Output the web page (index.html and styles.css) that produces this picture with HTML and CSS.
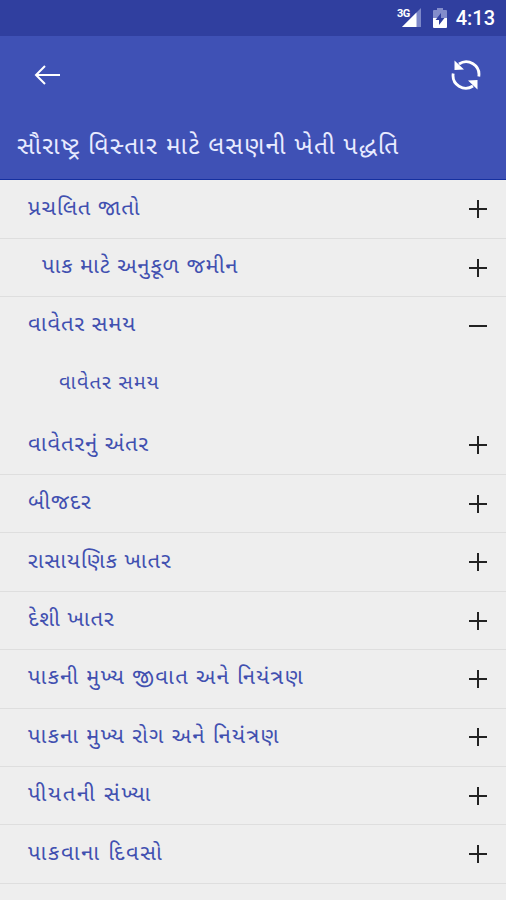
FILE: index.html
```html
<!DOCTYPE html>
<html lang="gu">
<head>
<meta charset="UTF-8">
<meta name="viewport" content="width=device-width, initial-scale=1.0">
<title>લસણની ખેતી</title>
<link rel="stylesheet" href="styles.css">
</head>
<body>
<div class="status-bar">
    <svg class="signal" width="25" height="20" viewBox="0 0 25 20">
        <path d="M24 0V19H5Z" fill="#7d88c9"/>
        <path d="M19.500 4.500V19H5Z" fill="#fff"/>
        <path d="M0 0h13v9H0z" fill="#303f9f"/>
        <text x="0" y="8.500" class="network">3G</text>
    </svg>
    <svg class="battery" width="14" height="20" viewBox="0 0 14 20">
        <path d="M4 0h6v2h3q1 0 1 1v7H0V3q0-1 1-1h3z" fill="#838dcb"/>
        <path d="M0 10h14v9q0 1-1 1H1q-1 0-1-1z" fill="#fff"/>
        <path d="M8 5v5h3.500L6 17v-5H2.500z" fill="#303f9f"/>
    </svg>
    <span class="clock">4:13</span>
</div>
<header>
    <div class="toolbar">
        <svg class="back" width="28" height="22" viewBox="0 0 28 22">
            <path d="M27 11H3M12 2L3 11L12 20" fill="none" stroke="#fff" stroke-width="2"/>
        </svg>
        <svg class="refresh" width="32" height="32" viewBox="0 0 32 32">
            <path d="M9 5A12.800 12.800 0 0 1 28.800 17.500M23 27A12.800 12.800 0 0 1 3.200 14.500" fill="none" stroke="#fff" stroke-width="2.800"/>
            <path d="M4.500 1.500L4.500 11L14 10.500ZM27.500 30.500L27.500 21L18 21.500Z" fill="#fff"/>
        </svg>
    </div>
    <h1>સૌરાષ્ટ્ર વિસ્તાર માટે લસણની ખેતી પદ્ધતિ</h1>
</header>
<ul class="topics">
    <li><span>પ્રચલિત જાતો</span><i class="plus"></i></li>
    <li class="indent"><span>પાક માટે અનુકૂળ જમીન</span><i class="plus"></i></li>
    <li class="open"><span>વાવેતર સમય</span><i class="minus"></i></li>
    <li class="child"><span>વાવેતર સમય</span></li>
    <li><span>વાવેતરનું અંતર</span><i class="plus"></i></li>
    <li><span>બીજદર</span><i class="plus"></i></li>
    <li><span>રાસાયણિક ખાતર</span><i class="plus"></i></li>
    <li><span>દેશી ખાતર</span><i class="plus"></i></li>
    <li class="wide"><span>પાકની મુખ્ય જીવાત અને નિયંત્રણ</span><i class="plus"></i></li>
    <li class="wide"><span>પાકના મુખ્ય રોગ અને નિયંત્રણ</span><i class="plus"></i></li>
    <li class="wider"><span>પીયતની સંખ્યા</span><i class="plus"></i></li>
    <li class="wider"><span>પાકવાના દિવસો</span><i class="plus"></i></li>
</ul>
</body>
</html>
```
FILE: styles.css
```css
* {
    box-sizing: border-box;
}

body {
    margin: 0;
    height: 900px;
    overflow: hidden;
    background-color: #eeeeee;
    font-family: "Noto Sans Gujarati", "Noto Sans", Roboto, sans-serif;
}

.status-bar {
    display: flex;
    justify-content: flex-end;
    align-items: center;
    height: 36px;
    padding-right: 11px;
    background-color: #303f9f;
    color: #fff;
}

.signal {
    overflow: visible;
}

.network {
    font: bold 11px Roboto, sans-serif;
    letter-spacing: -0.5px;
    fill: #fff;
}

.battery {
    margin: 0 9px 0 11px;
}

.clock {
    font: 500 20px/38px Roboto, sans-serif;
}

header {
    height: 144px;
    background-color: #3f51b5;
    border-bottom: 1px solid #1530a0;
}

.toolbar {
    display: flex;
    justify-content: space-between;
    align-items: center;
    height: 78px;
    padding: 0 24px 0 33px;
}

h1 {
    margin: 0;
    padding-left: 17px;
    color: #e8ebff;
    font-size: 24.5px;
    font-weight: 400;
    letter-spacing: 1.3px;
    line-height: 68px;
    white-space: nowrap;
}

.topics {
    margin: 0;
    padding: 0.5px 0 0;
    list-style: none;
}

.topics li {
    display: flex;
    justify-content: space-between;
    align-items: center;
    height: 58.4px;
    padding: 0 19px 0 28px;
    border-bottom: 1px solid #dedede;
    color: #4150b0;
    font-size: 22px;
    font-weight: 400;
    letter-spacing: 0.9px;
    line-height: 28px;
    white-space: nowrap;
}

.topics li.indent {
    padding-left: 42px;
}

.topics li.open {
    border-bottom-color: transparent;
}

.topics li.child {
    height: 61px;
    padding-left: 59px;
    border-bottom: none;
    font-size: 20px;
    letter-spacing: 1.1px;
}

.topics span {
    margin-top: 1px;
}

.topics li.child span {
    margin-top: -4px;
}

.topics li.wide {
    letter-spacing: 1.3px;
}

.topics li.wider {
    letter-spacing: 1.7px;
}

.plus,
.minus {
    width: 18px;
    height: 18px;
    background: linear-gradient(#222, #222) center / 18px 2px no-repeat;
}

.plus {
    background: linear-gradient(#222, #222) center / 18px 2px no-repeat,
        linear-gradient(#222, #222) center / 2px 18px no-repeat;
}
```
